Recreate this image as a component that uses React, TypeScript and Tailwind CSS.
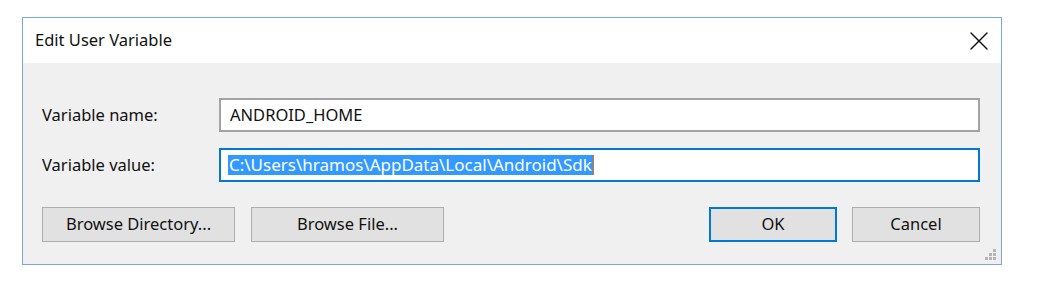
import { X } from "lucide-react";

const font = { fontFamily: '"Noto Sans", "Open Sans", sans-serif' };

function ResizeGrip() {
  const dots = [
    [8, 0],
    [4, 4],
    [8, 4],
    [0, 8],
    [4, 8],
    [8, 8],
  ];
  return (
    <svg width="12" height="12" viewBox="0 0 12 12" className="absolute right-[4px] bottom-[3px]">
      {dots.map(([x, y], i) => (
        <rect key={i} x={x} y={y} width="3" height="3" fill="#b5b5b5" />
      ))}
    </svg>
  );
}

function Button({ label, primary, className }: { label: string; primary?: boolean; className: string }) {
  return (
    <button
      className={`h-[35px] bg-[#e1e1e1] text-[16.5px] text-[#111] ${
        primary ? "border-2 border-[#0078d7]" : "border border-[#adadad]"
      } ${className}`}
    >
      {label}
    </button>
  );
}

export default function App() {
  return (
    <div className="w-[1044px] h-[292px] bg-white pt-[17px] pl-[22px]" style={font}>
      <div className="relative w-[980px] h-[248px] border border-[#74a9da] flex flex-col">
        <div className="h-[45px] bg-white flex items-center justify-between pl-[12px] pr-[6px]">
          <span className="text-[16.5px] text-[#111]">Edit User Variable</span>
          <X size={32} strokeWidth={1} className="text-[#111]" />
        </div>
        <div className="flex-1 bg-[#f0f0f0] pl-[19px] pr-[21px] pt-[35px]">
          <div className="flex items-center h-[34px]">
            <span className="w-[177px] text-[16.5px] text-[#111]">Variable name:</span>
            <div className="flex-1 h-[34px] bg-white border-2 border-[#a3a3a3] flex items-center pl-[9px] text-[16.5px] text-[#111]">
              ANDROID_HOME
            </div>
          </div>
          <div className="flex items-center h-[34px] mt-[16px]">
            <span className="w-[177px] text-[16.5px] text-[#111]">Variable value:</span>
            <div className="flex-1 h-[34px] bg-white border-2 border-[#0078d7] flex items-center pl-[7px] text-[17px]">
              <span className="bg-[#3399ff] text-white px-[1px] leading-[20px]">
                C:\Users\hramos\AppData\Local\Android\Sdk
              </span>
              <span className="w-[1px] h-[20px] bg-[#cc7a00]" />
            </div>
          </div>
          <div className="flex mt-[25px]">
            <Button label="Browse Directory..." className="w-[193px]" />
            <Button label="Browse File..." className="w-[193px] ml-[16px]" />
            <Button label="OK" primary className="w-[128px] ml-auto" />
            <Button label="Cancel" className="w-[128px] ml-[15px]" />
          </div>
        </div>
        <ResizeGrip />
      </div>
    </div>
  );
}
